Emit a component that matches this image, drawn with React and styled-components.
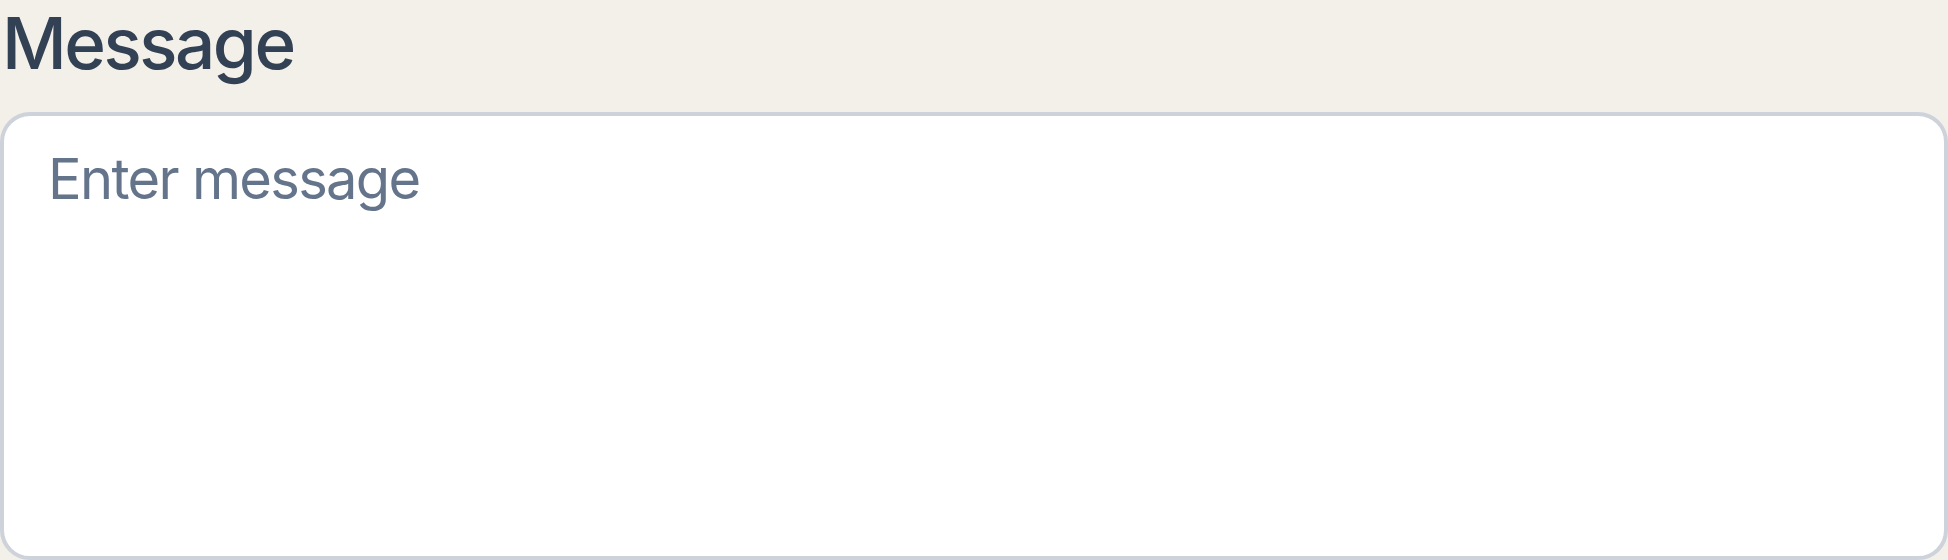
import React from "react";
import styled, { createGlobalStyle } from "styled-components";

const Global = createGlobalStyle`
  html, body { margin: 0; padding: 0; background: #f3f0e9; }
  body { font-family: Inter, "Noto Sans", sans-serif; }
  * { box-sizing: border-box; }
`;

const Field = styled.div`
  display: flex;
  flex-direction: column;
  gap: 25px;
  width: 1948px;
`;

const Label = styled.label`
  font-family: Inter, sans-serif;
  font-size: 71px;
  font-weight: 500;
  line-height: 87px;
  letter-spacing: -0.035em;
  color: #334155;
  padding-left: 2px;
`;

const TextArea = styled.textarea`
  display: block;
  width: 100%;
  height: 448px;
  resize: none;
  background: #ffffff;
  border: 4px solid #cdd2db;
  border-radius: 30px;
  padding: 30px 44px;
  font-family: Inter, sans-serif;
  font-size: 56px;
  line-height: 1.21;
  letter-spacing: -0.03em;
  color: #334155;
  outline: none;
  &::placeholder { color: #64748b; opacity: 1; }
`;

export default function App() {
  return (
    <>
      <Global />
      <Field>
        <Label htmlFor="msg">Message</Label>
        <TextArea id="msg" placeholder="Enter message" />
      </Field>
    </>
  );
}
